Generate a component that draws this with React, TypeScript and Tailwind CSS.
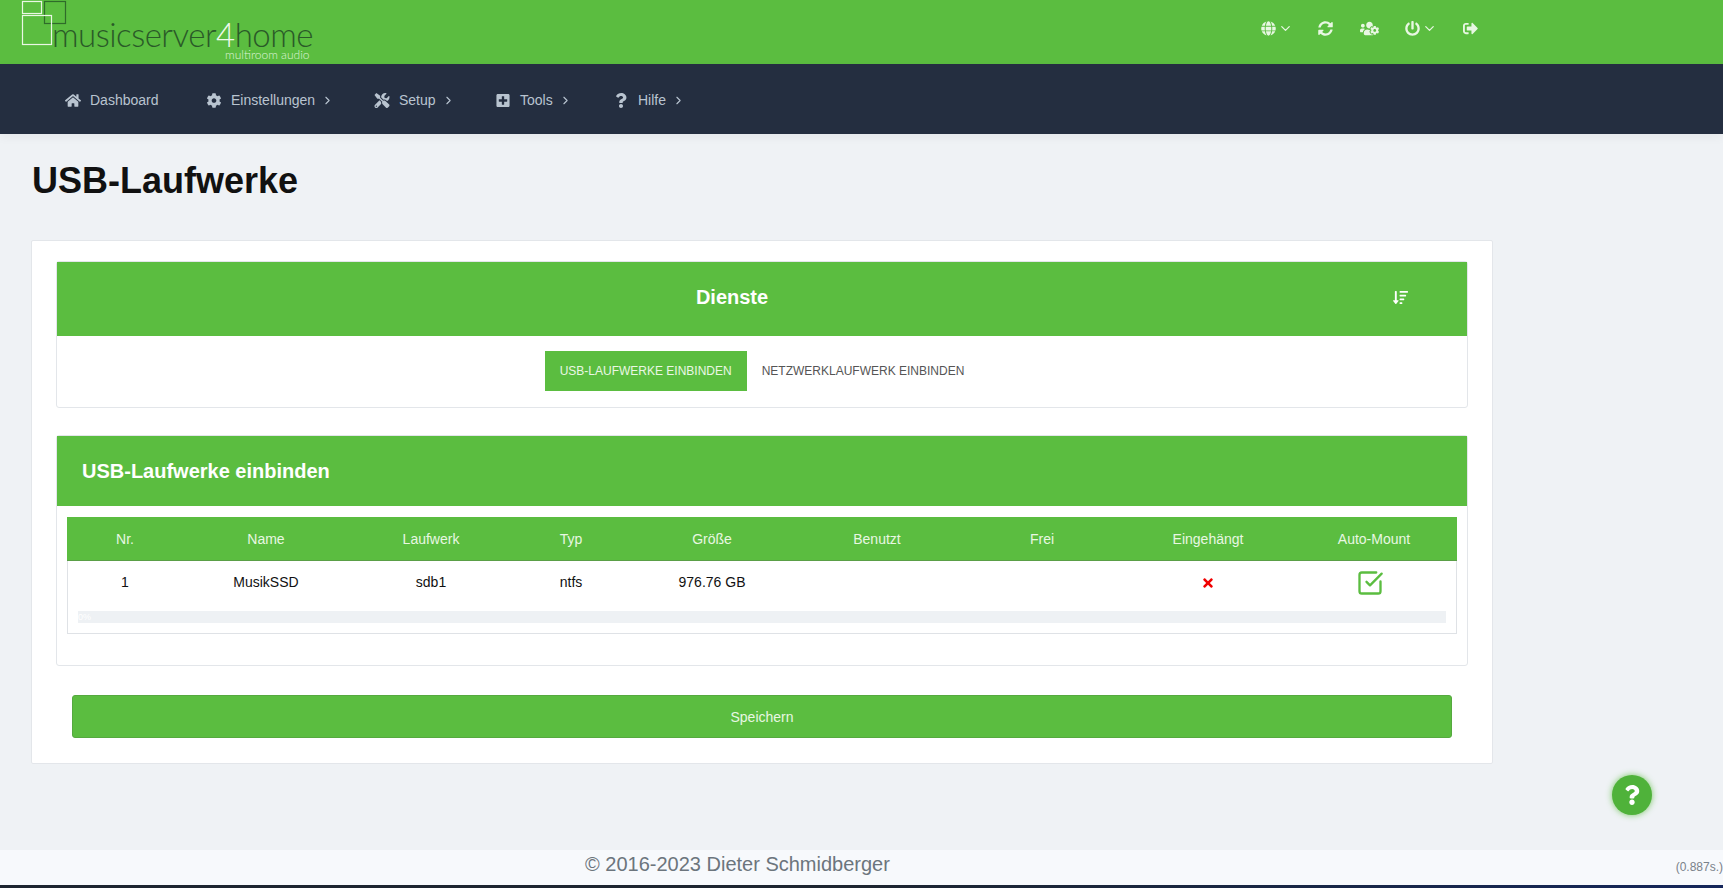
import { ChevronDown, ChevronRight, SquareCheckBig } from "lucide-react";
import {
  FaCog,
  FaGlobe,
  FaHome,
  FaPlusSquare,
  FaPowerOff,
  FaQuestion,
  FaSignOutAlt,
  FaSortAmountDown,
  FaSyncAlt,
  FaTimes,
  FaTools,
  FaUsersCog,
} from "react-icons/fa";

function Logo() {
  return (
    <div className="relative w-[320px] h-16 shrink-0">
      <svg className="absolute left-0 top-0" width="70" height="48" viewBox="0 0 70 48" fill="none">
        <rect x="44.5" y="1.5" width="21" height="22" stroke="#2f6b2a" strokeWidth="1.2" />
        <rect x="22.5" y="1.5" width="19" height="12" stroke="#eaf7e4" strokeWidth="1.2" />
        <rect x="22.5" y="15.5" width="29" height="29" stroke="#eaf7e4" strokeWidth="1.2" />
      </svg>
      <div className="absolute left-[52px] top-[19px] font-['Lato',sans-serif] font-light text-[33px] leading-[30px] tracking-[-0.5px] text-[#2a5a28] whitespace-nowrap">
        musicserver<span className="text-[#f0faec]">4</span>home
      </div>
      <div className="absolute left-[225px] top-[49px] font-['Lato',sans-serif] font-light text-[12px] leading-[11px] text-[#dff3d8] whitespace-nowrap">
        multiroom audio
      </div>
    </div>
  );
}

const navItems = [
  { label: "Dashboard", icon: FaHome, width: "w-[141px]", sub: false },
  { label: "Einstellungen", icon: FaCog, width: "w-[168px]", sub: true },
  { label: "Setup", icon: FaTools, width: "w-[121px]", sub: true },
  { label: "Tools", icon: FaPlusSquare, width: "w-[118px]", sub: true },
  { label: "Hilfe", icon: FaQuestion, width: "w-[90px]", sub: true },
];

const columns = [
  { label: "Nr.", width: "w-[116px]", value: "1" },
  { label: "Name", width: "w-[166px]", value: "MusikSSD" },
  { label: "Laufwerk", width: "w-[164px]", value: "sdb1" },
  { label: "Typ", width: "w-[116px]", value: "ntfs" },
  { label: "Größe", width: "w-[166px]", value: "976.76 GB" },
  { label: "Benutzt", width: "w-[164px]", value: "" },
  { label: "Frei", width: "w-[166px]", value: "" },
  { label: "Eingehängt", width: "w-[166px]", value: "x" },
  { label: "Auto-Mount", width: "w-[166px]", value: "check" },
];

function Cell({ value }: { value: string }) {
  if (value === "x") return <FaTimes className="inline-block mb-[2px] text-[#f00000] text-[14px]" />;
  if (value === "check")
    return <SquareCheckBig className="inline-block text-[#5bbd40] -ml-[9px]" size={28} strokeWidth={2} />;
  return <>{value}</>;
}

export default function App() {
  return (
    <div className="relative h-[888px] overflow-hidden flex flex-col bg-[#eff2f5] font-['Liberation_Sans',Arial,sans-serif]">
      <header className="h-16 shrink-0 bg-[#5bbd40] flex items-start">
        <Logo />
        <div className="ml-[941px] h-[57px] flex items-center text-[#e8f7e2]">
          <FaGlobe className="text-[15px]" />
          <ChevronDown size={15} className="ml-[2px]" />
          <FaSyncAlt className="text-[15px] ml-[25px]" />
          <FaUsersCog className="text-[19px] ml-[27px]" />
          <FaPowerOff className="text-[15px] ml-[26px]" />
          <ChevronDown size={15} className="ml-[2px]" />
          <FaSignOutAlt className="text-[15px] ml-[26px]" />
        </div>
      </header>

      <nav className="h-[70px] shrink-0 bg-[#242e40] flex items-center pt-[2px] pl-[65px] text-[14px] text-[#b9c4d0] shadow-[0_3px_10px_rgba(0,0,0,0.05)]">
        {navItems.map((item) => (
          <div key={item.label} className={`flex items-center ${item.width}`}>
            <item.icon className="text-[15px] w-4 shrink-0" />
            <span className="ml-[9px]">{item.label}</span>
            {item.sub && <ChevronRight size={13} className="ml-[6px]" />}
          </div>
        ))}
      </nav>

      <main className="flex-1 pl-[31px]">
        <h1 className="mt-[26px] ml-[1px] text-[36px] leading-[42px] font-bold text-[#111111]">USB-Laufwerke</h1>

        <div className="mt-[38px] w-[1462px] h-[524px] bg-white border border-[#e3e6ea] rounded-[2px] px-6 pt-5">
          <section className="border border-[#e3e6ea] rounded-[3px] h-[147px]">
            <div className="h-[74px] pb-1 bg-[#5bbd40] flex items-center text-white">
              <div className="w-[1336px] text-center text-[20px] font-bold pl-[14px]">Dienste</div>
              <FaSortAmountDown className="text-[15px]" />
            </div>
            <div className="flex justify-center pt-[15px] text-[12px] uppercase">
              <div className="h-10 px-[15px] bg-[#5bbd40] text-[#eaf7e4] flex items-center">USB-Laufwerke einbinden</div>
              <div className="h-10 px-[15px] text-[#555555] flex items-center">Netzwerklaufwerk einbinden</div>
            </div>
          </section>

          <section className="mt-[27px] border border-[#e3e6ea] rounded-[3px] h-[231px]">
            <div className="h-[70px] bg-[#5bbd40] flex items-center pl-[25px] text-[20px] font-bold text-white">
              USB-Laufwerke einbinden
            </div>
            <div className="mx-[10px] mt-[11px] h-[117px] border border-[#dfe2e6] border-t-0">
              <table className="w-[1390px] -ml-px table-fixed border-collapse text-center text-[14px]">
                <thead>
                  <tr className="h-[43px] bg-[#5bbd40] text-[#e8f7e2] border-b border-[#5a9f46]">
                    {columns.map((c) => (
                      <th key={c.label} className={`${c.width} pt-[2px] font-normal`}>{c.label}</th>
                    ))}
                  </tr>
                </thead>
                <tbody>
                  <tr className="h-[44px] text-[#111111]">
                    {columns.map((c) => (
                      <td key={c.label} className="align-middle pt-[1px]"><Cell value={c.value} /></td>
                    ))}
                  </tr>
                </tbody>
              </table>
              <div className="mx-[10px] mt-[7px] h-3 bg-[#eef1f4] text-[9px] leading-3 text-white">0%</div>
            </div>
          </section>

          <button className="block mt-[29px] ml-4 w-[1380px] h-[43px] pt-[2px] bg-[#5bbd40] border border-[#55a93f] rounded-[3px] text-[14px] text-[#e8f7e2]">
            Speichern
          </button>
        </div>
      </main>

      <footer className="relative h-[35px] shrink-0 bg-[#f7f9fc] flex items-center pb-2 pl-[585px] text-[20px] text-[#6c757d]">
        © 2016-2023 Dieter Schmidberger
        <span className="absolute right-0 top-[10px] text-[12px] leading-[14px] text-[#7a828a]">(0.887s.)</span>
      </footer>
      <div className="h-[3px] shrink-0 bg-gradient-to-r from-[#1d2530] via-[#1d2530] to-[#15265a]" />

      <button className="absolute left-[1612px] top-[775px] w-10 h-10 rounded-full bg-[#4fb23a] text-white flex items-center justify-center shadow-[0_0_6px_rgba(91,189,64,0.8)]">
        <FaQuestion className="text-[20px]" />
      </button>
    </div>
  );
}
